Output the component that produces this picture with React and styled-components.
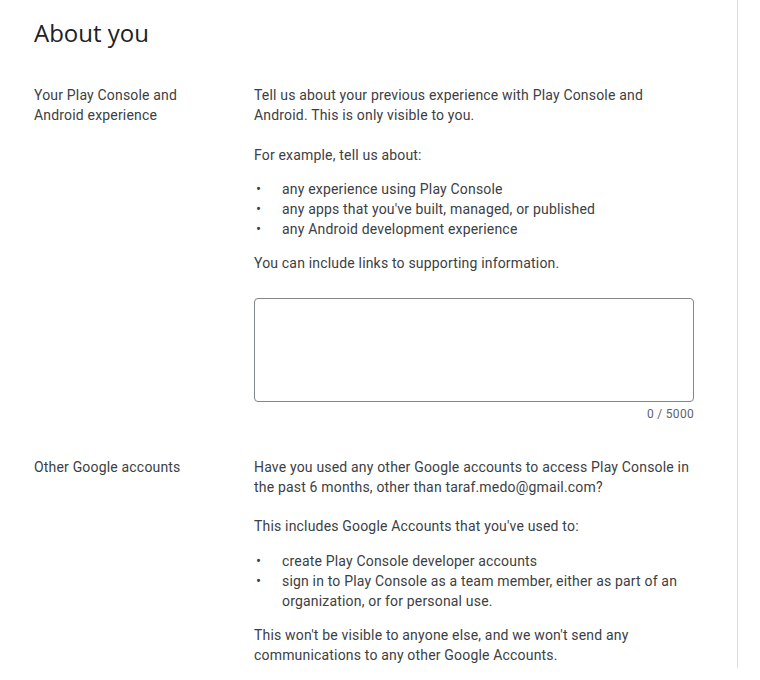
import React from 'react';
import styled, { createGlobalStyle } from 'styled-components';

const GlobalStyle = createGlobalStyle`
  body {
    margin: 0;
    background: #fff;
    font-family: Roboto, "Liberation Sans", Arial, sans-serif;
    -webkit-font-smoothing: antialiased;
  }
`;

const Page = styled.main`
  width: 738px;
  box-sizing: border-box;
  padding: 17px 34px 3px;
  border-right: 1px solid #dadce0;
  color: #3c4043;
`;

const Title = styled.h1`
  margin: 0 0 36px;
  font-family: "Open Sans", "Noto Sans", sans-serif;
  font-size: 24px;
  line-height: 32px;
  font-weight: 400;
  color: #202124;
`;

const Section = styled.section`
  display: grid;
  grid-template-columns: 220px 440px;
  font-size: 14px;
  line-height: 20px;
  letter-spacing: 0.18px;
  & + & {
    margin-top: 36px;
  }
`;

const Label = styled.div`
  padding-right: 48px;
`;

const Body = styled.div`
  display: flex;
  flex-direction: column;
`;

const Text = styled.p`
  margin: ${p => p.$top || 0}px 0 0;
`;

const List = styled.ul`
  margin: ${p => p.$top || 15}px 0 0;
  padding: 0;
  list-style: none;
`;

const Item = styled.li`
  display: flex;
`;

const Bullet = styled.span`
  flex: 0 0 28px;
  padding-left: 2px;
  box-sizing: border-box;
  font-size: 15px;
`;

const Field = styled.textarea`
  display: block;
  margin-top: 25px;
  width: 440px;
  height: 104px;
  box-sizing: border-box;
  border: 1px solid #80868b;
  border-radius: 4px;
  resize: none;
  outline: none;
  font: inherit;
  padding: 12px 16px;
`;

const Counter = styled.div`
  margin: 4px 0 -1px;
  text-align: right;
  font-size: 12px;
  line-height: 16px;
  letter-spacing: 0.3px;
  color: #5f6368;
`;

const Bullets = ({ items, top }) => (
  <List $top={top}>
    {items.map(t => (
      <Item key={t}><Bullet>•</Bullet><span>{t}</span></Item>
    ))}
  </List>
);

const App = () => (
  <>
    <GlobalStyle />
    <Page>
      <Title>About you</Title>
      <Section>
        <Label>Your Play Console and Android experience</Label>
        <Body>
          <Text>Tell us about your previous experience with Play Console and Android. This is only visible to you.</Text>
          <Text $top={20}>For example, tell us about:</Text>
          <Bullets
            top={14}
            items={[
              'any experience using Play Console',
              "any apps that you've built, managed, or published",
              'any Android development experience',
            ]}
          />
          <Text $top={14}>You can include links to supporting information.</Text>
          <Field maxLength={5000} />
          <Counter>0 / 5000</Counter>
        </Body>
      </Section>
      <Section>
        <Label>Other Google accounts</Label>
        <Body>
          <Text>Have you used any other Google accounts to access Play Console in the past 6 months, other than taraf.medo@gmail.com?</Text>
          <Text $top={19}>This includes Google Accounts that you've used to:</Text>
          <Bullets
            items={[
              'create Play Console developer accounts',
              'sign in to Play Console as a team member, either as part of an organization, or for personal use.',
            ]}
          />
          <Text $top={14}>This won't be visible to anyone else, and we won't send any communications to any other Google Accounts.</Text>
        </Body>
      </Section>
    </Page>
  </>
);

export default App;
